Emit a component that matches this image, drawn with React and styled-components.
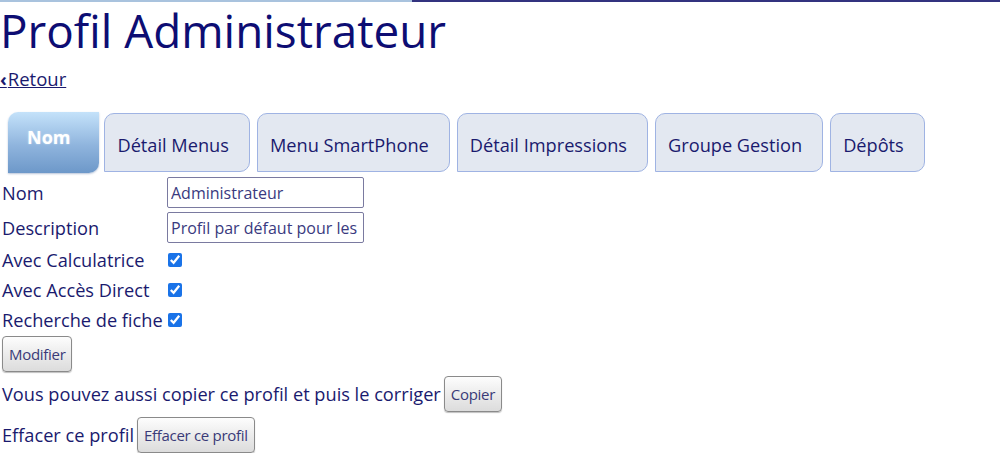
import styled, { createGlobalStyle } from 'styled-components';

const GlobalStyle = createGlobalStyle`
  body {
    margin: 0;
    background: #fff;
    font-family: "Open Sans", "Liberation Sans", sans-serif;
    color: #1a1a6e;
  }
`;

const TopBar = styled.div`
  display: flex;
  height: 2px;
  div:first-child {
    width: 412px;
    background: #a9c3de;
  }
  div:last-child {
    flex: 1;
    background: #33337f;
  }
`;

const Title = styled.h1`
  margin: 0;
  font-size: 45.8px;
  font-weight: 400;
  line-height: 56px;
  color: #0d0d73;
`;

const Back = styled.a`
  display: inline-block;
  margin-top: 10px;
  font-size: 18.5px;
  line-height: 22px;
  color: #1a1a6e;
  text-decoration: underline;
  cursor: pointer;
  span {
    font-weight: 700;
    margin-right: 1px;
  }
`;

const Tabs = styled.div`
  display: flex;
  align-items: flex-start;
  gap: 7px;
  margin: 21px 0 0 8px;
`;

const Tab = styled.div`
  box-sizing: border-box;
  height: 59px;
  margin-top: 1px;
  padding: 5px 20px 0 12px;
  display: flex;
  align-items: center;
  font-size: 18.2px;
  color: #1a1a6e;
  background: #e3e8f1;
  border: 1px solid #9fb3e3;
  border-radius: 10px 10px 10px 0;
`;

const ActiveTab = styled(Tab)`
  height: 61px;
  margin: 0 -2px 0 0;
  padding: 0 29px 12px 19px;
  border: none;
  border-radius: 10px 0 10px 0;
  background: linear-gradient(#c4e2fa, #8fb4dd 55%, #6d98c9);
  color: #fff;
  font-size: 18px;
  font-weight: 700;
  text-shadow: 0 0 2px #c9def3;
  box-shadow: 0 1px 2px rgba(80, 110, 160, 0.4);
`;

const Form = styled.div`
  margin-top: 2px;
  padding-left: 2px;
`;

const Row = styled.div`
  display: flex;
  align-items: center;
  height: ${({ $h }) => $h}px;
  font-size: 18.2px;
`;

const Label = styled.label`
  width: 165px;
  flex-shrink: 0;
  white-space: nowrap;
`;

const Input = styled.input`
  box-sizing: border-box;
  width: 197px;
  height: 31px;
  padding: 0 3px;
  border: 1px solid #7a7aa0;
  border-radius: 2px;
  font-family: "Open Sans", "Liberation Sans", sans-serif;
  font-size: 16px;
  color: #3a3a80;
  background: #fff;
`;

const Check = styled.input`
  width: 14px;
  height: 14px;
  margin: 0 0 0 1px;
  accent-color: #1a73e8;
`;

const Button = styled.button`
  box-sizing: border-box;
  height: 36px;
  margin-left: ${({ $ml }) => $ml || 0}px;
  padding: 0 6px;
  font-family: "Open Sans", "Liberation Sans", sans-serif;
  font-size: 15px;
  letter-spacing: -0.3px;
  color: #3a3a78;
  background: linear-gradient(#fdfdfd, #eaeaea 55%, #dcdcdc);
  border: 1px solid #8a8a8a;
  border-radius: 4px;
  box-shadow: 0 1px 1px rgba(0, 0, 0, 0.25);
`;

const Line = styled.div`
  display: flex;
  align-items: center;
  font-size: 18.2px;
  margin-top: ${({ $mt }) => $mt}px;
`;

export default function App() {
  return (
    <>
      <GlobalStyle />
      <TopBar>
        <div />
        <div />
      </TopBar>
      <Title>Profil Administrateur</Title>
      <Back><span>‹</span>Retour</Back>
      <Tabs>
        <ActiveTab>Nom</ActiveTab>
        <Tab>Détail Menus</Tab>
        <Tab>Menu SmartPhone</Tab>
        <Tab>Détail Impressions</Tab>
        <Tab>Groupe Gestion</Tab>
        <Tab>Dépôts</Tab>
      </Tabs>
      <Form>
        <Row $h={35}>
          <Label>Nom</Label>
          <Input defaultValue="Administrateur" />
        </Row>
        <Row $h={35}>
          <Label>Description</Label>
          <Input defaultValue="Profil par défaut pour les administrateurs" />
        </Row>
        <Row $h={30}>
          <Label>Avec Calculatrice</Label>
          <Check type="checkbox" defaultChecked />
        </Row>
        <Row $h={30}>
          <Label>Avec Accès Direct</Label>
          <Check type="checkbox" defaultChecked />
        </Row>
        <Row $h={30}>
          <Label>Recherche de fiche</Label>
          <Check type="checkbox" defaultChecked />
        </Row>
        <Line $mt={1}>
          <Button>Modifier</Button>
        </Line>
        <Line $mt={4}>
          Vous pouvez aussi copier ce profil et puis le corriger
          <Button $ml={3}>Copier</Button>
        </Line>
        <Line $mt={5}>
          Effacer ce profil
          <Button $ml={3}>Effacer ce profil</Button>
        </Line>
      </Form>
    </>
  );
}
